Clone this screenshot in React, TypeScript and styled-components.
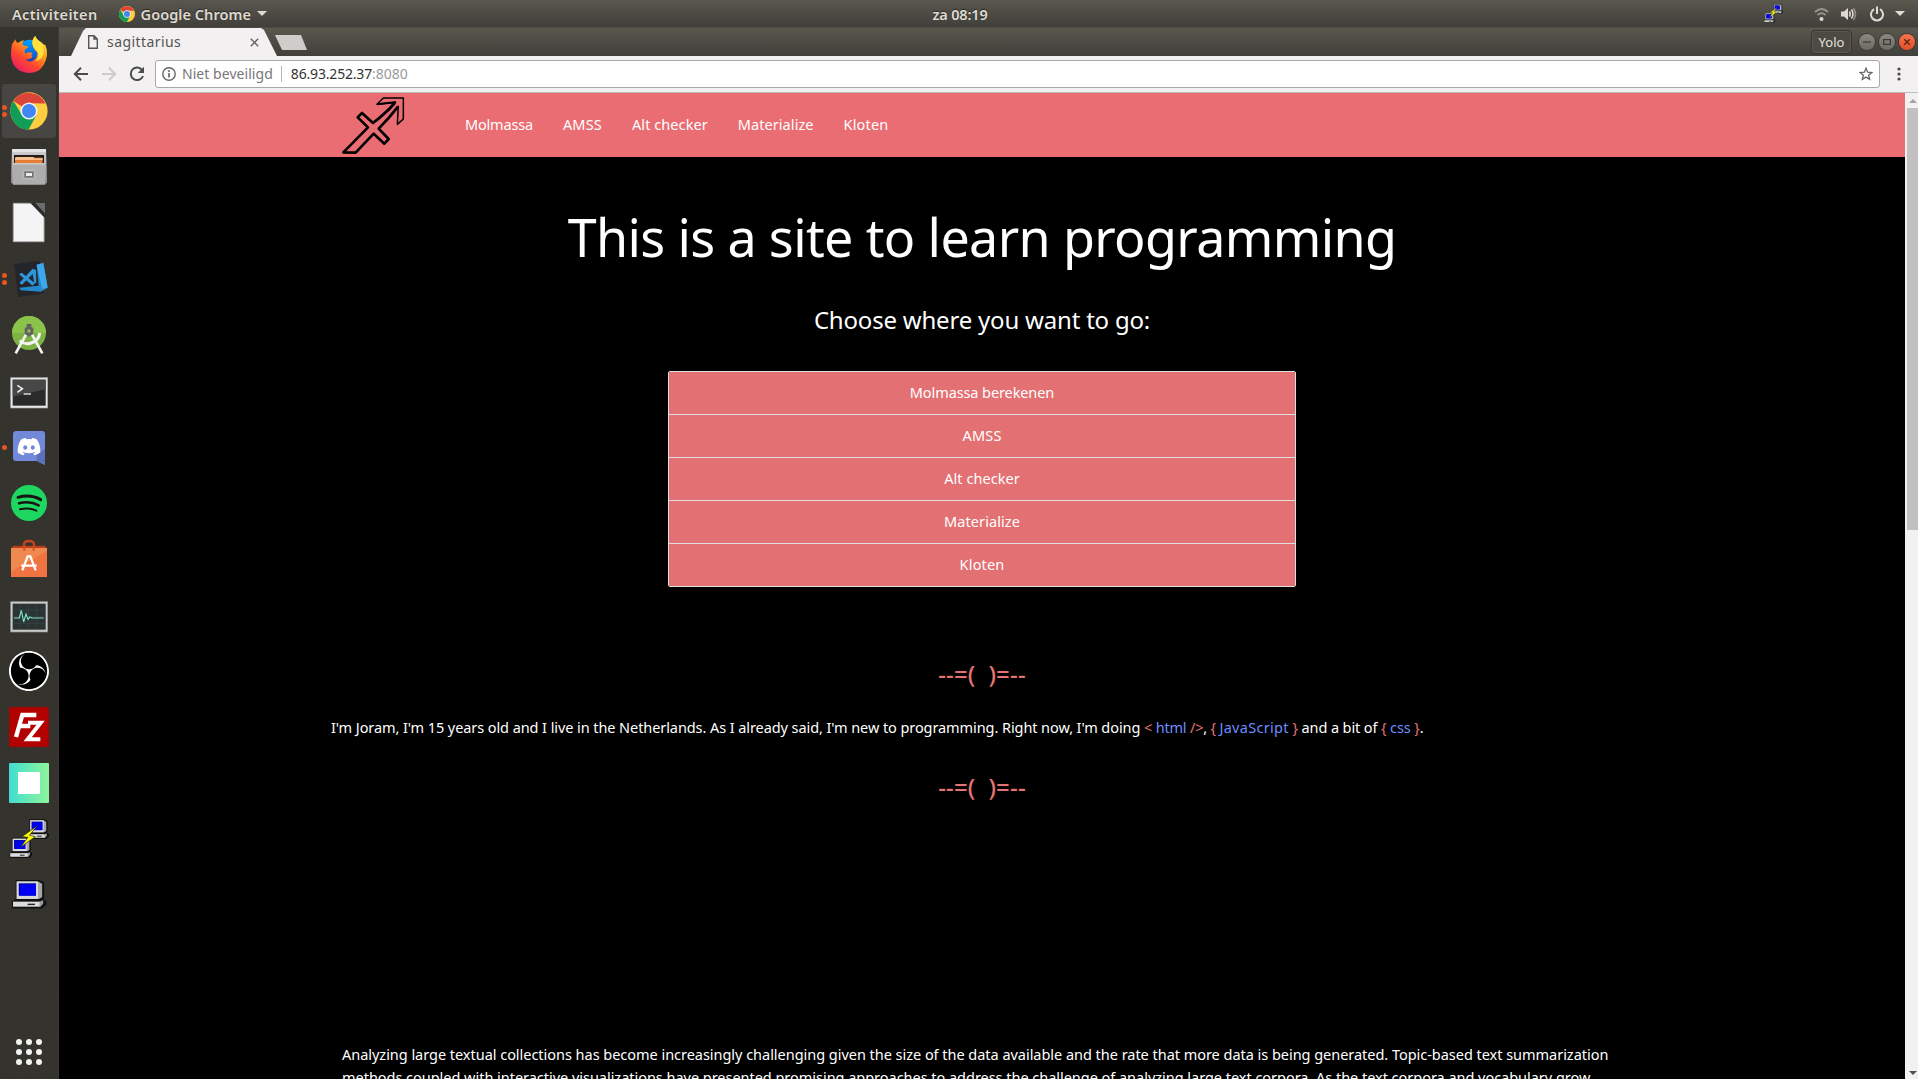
import React from 'react';
import styled, { createGlobalStyle, css } from 'styled-components';
import { FaDiscord } from 'react-icons/fa6';
import { SiObsstudio } from 'react-icons/si';

const Global = createGlobalStyle`
  *, *::before, *::after { box-sizing: border-box; }
  body { margin: 0; background: #000; overflow: hidden; font-family: "Noto Sans", "Open Sans", sans-serif; }
`;

const Desktop = styled.div`
  height: 100vh;
  display: grid;
  grid-template-rows: 27px minmax(0, 1fr);
  overflow: hidden;
`;

const T = styled.span<{ $track?: number }>`
  letter-spacing: ${p => p.$track ?? 0}px;
  white-space: pre;
`;

/* ---------- system bar ---------- */
const SystemBar = styled.header`
  display: grid;
  grid-template-columns: 1fr auto 1fr;
  align-items: center;
  padding: 0 10px 0 12px;
  background: linear-gradient(#5a574e, #403f3a);
  color: #dfdbd2;
  font-size: 14.5px;
  font-weight: 600;
  line-height: 26px;
  text-shadow: 0 -1px 1px rgba(0, 0, 0, 0.5);
`;
const BarGroup = styled.div<{ $end?: boolean }>`
  display: flex;
  align-items: center;
  justify-content: ${p => (p.$end ? 'flex-end' : 'flex-start')};
  height: 26px;
  svg { flex: none; display: block; }
`;
const Clock = styled.div`
  height: 26px;
`;
const ChromeSlot = styled.span`
  display: flex;
  margin: 0 6px 0 21px;
`;
const Caret = styled.span<{ $gap: number }>`
  margin-left: ${p => p.$gap}px;
  border: 5px solid transparent;
  border-top-color: #dfdbd2;
  border-bottom: 0;
`;
const TrayIcon = styled.span<{ $gap: number }>`
  display: flex;
  margin-left: ${p => p.$gap}px;
`;

const Workspace = styled.div`
  display: grid;
  grid-template-columns: 59px minmax(0, 1fr);
  min-height: 0;
`;

/* ---------- dock ---------- */
const DockBar = styled.nav`
  display: flex;
  flex-direction: column;
  min-height: 0;
  background:
    repeating-linear-gradient(60deg, rgba(255, 255, 255, 0.012) 0 2px, transparent 2px 5px),
    #34322d;
  border-right: 1px solid #3b3a35;
`;
const DockItem = styled.div<{ $active?: boolean }>`
  height: 54px;
  margin: 1px 2px;
  flex: none;
  display: grid;
  grid-template-columns: 5px 48px;
  align-items: center;
  border-radius: 3px;
  ${p => p.$active && css`background: #474642;`}
`;
const Pips = styled.div`
  display: grid;
  gap: 2px;
  i { width: 5px; height: 5px; border-radius: 50%; background: #e95420; }
`;
const AppGrid = styled.div`
  margin: auto 0 14px 16px;
  display: grid;
  grid-template-columns: repeat(3, 6px);
  gap: 4px;
  i { width: 6px; height: 6px; border-radius: 50%; background: #f2f2f0; }
`;

/* ---------- browser ---------- */
const Browser = styled.section`
  display: grid;
  grid-template-rows: 29px 37px minmax(0, 1fr);
  min-height: 0;
`;
const TabStrip = styled.div`
  display: flex;
  background: linear-gradient(#5a574e, #403f3a);
  border-top: 1px solid #4d4b43;
`;
const Tab = styled.div`
  width: 206px;
  height: 28px;
  margin-left: 12px;
  padding: 0 18px 0 17px;
  display: flex;
  align-items: center;
  background: #f2f0f1;
  clip-path: polygon(0 100%, 12px 3px, 15px 0, 190px 0, 193px 2px, 206px 100%);
  color: #555452;
  font-size: 14px;
  svg { flex: none; }
`;
const TabTitle = styled.span`
  flex: 1;
  margin-left: 9px;
  line-height: 28px;
`;
const NewTab = styled.div`
  width: 32px;
  height: 15px;
  margin: 7px 0 0 -2px;
  background: #cfcdca;
  clip-path: polygon(0 0, 26px 0, 32px 100%, 7px 100%);
`;
const WindowControls = styled.div`
  margin-left: auto;
  display: flex;
  align-items: center;
  gap: 4px;
  padding-right: 3px;
`;
const Profile = styled.div`
  width: 41px;
  height: 24px;
  margin-right: 3px;
  border: 1px solid #37362f;
  border-radius: 4px;
  box-shadow: inset 0 0 0 1px #5a5850;
  background: #4c4a43;
  color: #e4e2dc;
  font-size: 13px;
  line-height: 22px;
  text-align: center;
`;
const WinButton = styled.div<{ $close?: boolean }>`
  width: 16px;
  height: 16px;
  border-radius: 50%;
  display: grid;
  place-items: center;
  background: ${p => (p.$close ? 'linear-gradient(#f4734c, #e2502a)' : 'linear-gradient(#8a8880, #6c6b63)')};
  box-shadow: 0 0 0 1px #3a3932;
  svg { display: block; }
`;
const Toolbar = styled.div`
  display: flex;
  align-items: center;
  background: #f2f0f1;
  border-bottom: 1px solid #bdbbbc;
  padding: 0 17px 0 14px;
  svg { flex: none; display: block; }
`;
const NavIcons = styled.div`
  display: flex;
  gap: 12px;
  margin-right: 10px;
`;
const Omnibox = styled.div`
  flex: 1;
  height: 28px;
  display: flex;
  align-items: center;
  padding: 0 6px;
  border: 1px solid #a9a7a8;
  border-radius: 3px;
  background: #fff;
  font-size: 14px;
  line-height: 16px;
  color: #77777a;
`;
const Security = styled.span`
  margin: 0 9px 0 6px;
  padding-right: 8px;
  border-right: 1px solid #b5b5b5;
`;
const Raised = styled.span`
  padding-bottom: 1px;
`;
const Host = styled(Raised)`
  color: #333;
`;
const Port = styled(Raised)`
  flex: 1;
  color: #999;
`;
const MenuSlot = styled.span`
  display: flex;
  margin-left: 17px;
`;

const Viewport = styled.div`
  display: grid;
  grid-template-columns: minmax(0, 1fr) 13px;
  min-height: 0;
  overflow: hidden;
`;
const Scrollbar = styled.div`
  display: flex;
  flex-direction: column;
  align-items: center;
  background: #f1f1f1;
  padding: 6px 0 4px 2px;
`;
const ScrollArrow = styled.span<{ $down?: boolean }>`
  border: 4px solid transparent;
  ${p => (p.$down
    ? css`border-top-color: #505050; border-bottom: 0; margin-top: auto;`
    : css`border-bottom-color: #a3a3a3; border-top: 0;`)}
`;
const Thumb = styled.div`
  width: 11px;
  height: 422px;
  margin-top: 5px;
  background: #c1c1c1;
`;

/* ---------- site ---------- */
const Site = styled.div`
  background: #000;
  color: #fff;
  font-size: 14.5px;
  overflow: hidden;
`;
const SiteNav = styled.nav`
  height: 64px;
  background: #ea6d73;
  display: flex;
  align-items: center;
  padding-left: 282px;
  svg { margin-top: 2px; }
`;
const Links = styled.ul`
  list-style: none;
  margin: 0 0 0 60px;
  padding: 0;
  display: flex;
  gap: 30px;
  height: 64px;
  line-height: 62px;
`;
const Title = styled.h1`
  margin: 44px 0 0;
  font-size: 52px;
  font-weight: 400;
  line-height: 72px;
  text-align: center;
`;
const Subtitle = styled.h2`
  margin: 30px 0 0;
  font-size: 24px;
  font-weight: 400;
  line-height: 34px;
  text-align: center;
`;
const Menu = styled.ul`
  width: 628px;
  margin: 34px auto 0;
  padding: 0;
  list-style: none;
  border: 1px solid #e0e0e0;
  border-radius: 2px;
  overflow: hidden;
`;
const MenuItem = styled.li`
  height: 42px;
  line-height: 40px;
  text-align: center;
  background: #e37072;
  & + & { height: 43px; border-top: 1px solid #e0e0e0; }
`;
const Ornament = styled.div<{ $top: number }>`
  margin-top: ${p => p.$top}px;
  height: 34px;
  line-height: 34px;
  font-size: 24px;
  font-weight: 500;
  text-align: center;
  color: #e57373;
`;
const Bio = styled.p`
  margin: 25px 0 0 272px;
  line-height: 23px;
`;
const Mark = styled.span`
  color: #e57373;
`;
const Lang = styled.span`
  color: #6d8dff;
`;
const Article = styled.p`
  margin: 239px 0 0 283px;
  line-height: 22.5px;
`;
const Line = styled.span`
  display: block;
`;

/* ---------- drawings ---------- */
const ChromeLogo = () => (
  <>
    <circle cx="24" cy="24" r="24" fill="#ffcd40" />
    <path d="M24 24 4 11A24 24 0 0 1 45.500 14.500L24 14Z" fill="#db4437" />
    <path d="M4 11A24 24 0 0 0 23.500 48L33.500 29.500 14.800 29Z" fill="#0f9d58" />
    <circle cx="24" cy="24" r="11" fill="#f1f1f1" />
    <circle cx="24" cy="24" r="9" fill="#4285f4" />
  </>
);

const Pc = ({ x, y, s = 1, sy = s }: { x: number; y: number; s?: number; sy?: number }) => (
  <g transform={`translate(${x} ${y}) scale(${s} ${sy})`}>
    <path d="M7 0H52L62 5V38L54 44H7Z" fill="#111" />
    <path d="M9 3H50L58 8V36L50 41H9Z" fill="#a7a7a7" />
    <path d="M9 3H50V40H9Z" fill="#d9d9d9" />
    <path d="M13 7H46V33H13Z" fill="#00008a" />
    <path d="M15 9H46V33H15Z" fill="#0000f5" />
    <path d="M0 45 8 40H60L66 45V52L58 60H0Z" fill="#111" />
    <path d="M2 46H52L60 43V50L54 57H2Z" fill="#9c9c9c" />
    <path d="M2 46H53V55H2Z" fill="#dcdcdc" />
    <path d="M30 50H44V53H30Z" fill="#222" />
  </g>
);

const Putty = () => (
  <>
    <Pc x={82} y={718} s={0.98} />
    <Pc x={29} y={773} s={1.02} />
    <path d="M112 737 66 770 84 772 61 802 106 770 88 766Z" fill="#ff0" stroke="#222" strokeWidth="2" />
  </>
);

const Sagittarius = () => (
  <svg width="64" height="60" viewBox="1026 288 192 180" fill="none" stroke="#000" strokeLinejoin="round">
    <path d="M1187 309Q1160 340 1122 369L1089 339 1076 352 1107 382 1033 457 1070 458 1124 401 1156 431 1169 417 1139 386Q1170 355 1197 320" strokeWidth="8" />
    <path d="M1189 307 1134 313 1153 294H1213V357L1195 373 1198 317" strokeWidth="4.500" />
    <path d="M1134 313 1189 307 1166 333" strokeWidth="6" />
  </svg>
);

type App = { name: string; cy: number; pips?: number; active?: boolean; art: React.ReactNode };

const apps: App[] = [
  {
    name: 'firefox', cy: 105, art: (
      <>
        <defs>
          <linearGradient id="fx" x1="0.9" y1="0" x2="0.2" y2="1">
            <stop offset="0" stopColor="#fff44f" /><stop offset="0.35" stopColor="#ffa41c" />
            <stop offset="0.65" stopColor="#ff4a2d" /><stop offset="1" stopColor="#e8186c" />
          </linearGradient>
          <linearGradient id="fxb" x1="0" y1="0" x2="0" y2="1">
            <stop offset="0" stopColor="#00a2ff" /><stop offset="0.6" stopColor="#0a62dc" /><stop offset="1" stopColor="#321a80" />
          </linearGradient>
        </defs>
        <circle cx="90" cy="99" r="40" fill="url(#fxb)" />
        <path d="M36 73Q44 62 46 58 49 70 55 68 63 62 72 60 66 68 68 75L86 80 74 90 75 101Q90 93 98 101 90 108 98 108 90 122 76 116 86 130 101 121 113 112 112 98 98 84 97 68 98 54 106 48 109 58 124 67 134 78 136 74 142 88 141 106 136 138 115 152 84 166 57 151 33 135 33 103 33 86 36 73Z" fill="url(#fx)" />
        <path d="M106 48Q97 56 97 70 98 84 113 96 119 110 106 124 125 120 130 103 136 80 119 66 108 58 106 48Z" fill="#ffe13a" />
      </>
    ),
  },
  {
    name: 'chrome', cy: 273, pips: 2, active: true,
    art: <g transform="translate(31 217) scale(2.33)"><ChromeLogo /></g>,
  },
  {
    name: 'files', cy: 441, art: (
      <>
        <defs>
          <linearGradient id="cab" x1="0" y1="0" x2="0" y2="1"><stop offset="0" stopColor="#d2d2d2" /><stop offset="1" stopColor="#8d8d8d" /></linearGradient>
        </defs>
        <path d="M36 387H138L141 487 134 495H40L33 487Z" fill="url(#cab)" />
        <path d="M36 387H138V396H36Z" fill="#e4e4e4" />
        <rect x="42" y="405" width="90" height="30" fill="#241c17" />
        <path d="M45 413H128V432H45Z" fill="#e57b35" />
        <path d="M49 411H100L104 415H128V420H45V413Z" fill="#f7c08c" />
        <path d="M39 430H135V492H39Z" fill="#adadad" />
        <path d="M39 430H135V433H39Z" fill="#dedede" />
        <rect x="70" y="451" width="34" height="25" rx="4" fill="#8b8b8b" stroke="#d8d8d8" strokeWidth="2" />
        <rect x="77" y="458" width="20" height="11" fill="#eee" stroke="#555" strokeWidth="2" />
      </>
    ),
  },
  {
    name: 'libreoffice', cy: 609, art: (
      <>
        <path d="M40 550H95L132 590V665H40Z" fill="#f4f4f4" stroke="#b0b0b0" strokeWidth="3" />
        <path d="M105 549H135V581Z" fill="#6b6b6b" />
        <path d="M91 549H106L135 581V594Z" fill="#2b2b2b" />
      </>
    ),
  },
  {
    name: 'vscode', cy: 777, pips: 2, art: (
      <>
        <path d="M42 733 118 722 132 820 55 831Z" fill="#23252b" />
        <path d="M110 734 130 729 143 803 123 815 62 811 58 803 116 797Z" fill="#2489ca" />
        <path d="M110 734 130 729 143 803 126 806Z" fill="#3ea6ea" />
        <path d="M57 763 65 758 104 789 98 797Z M98 746 108 750 109 788 103 791 98 762 66 794 58 789Z" fill="#2f95d8" />
      </>
    ),
  },
  {
    name: 'android-studio', cy: 105, art: (
      <>
        <circle cx="87" cy="99" r="51" fill="#7cb342" />
        <path d="M36 99A51 51 0 0 1 138 99Z" fill="#8bc34a" />
        <path d="M78 104 47 160M96 104 127 160" stroke="#f3f3f3" strokeWidth="8" />
        <path d="M59 122Q75 136 93 129 117 122 119 99" fill="none" stroke="#f3f3f3" strokeWidth="9" />
        <path d="M80 72H94V80H80Z" fill="#5b5b5b" />
        <path d="M74 84 87 77 100 84V101L87 110 74 101Z" fill="#636363" />
        <circle cx="87" cy="93" r="5" fill="#8bc34a" />
      </>
    ),
  },
  {
    name: 'terminal', cy: 273, art: (
      <>
        <rect x="32" y="233" width="111" height="91" fill="#e6e6e4" stroke="#a5a5a3" strokeWidth="2" />
        <rect x="38" y="239" width="99" height="78" fill="#2a2a2a" />
        <path d="M38 239H137V268L38 290Z" fill="#474747" />
        <path d="M52 256 67 266 52 277" fill="none" stroke="#eee" strokeWidth="5" />
        <path d="M71 282H93" stroke="#eee" strokeWidth="4" />
      </>
    ),
  },
  {
    name: 'discord', cy: 441, pips: 1, art: (
      <>
        <path d="M48 393H126Q135 393 135 402V495L110 483H48Q39 483 39 474V402Q39 393 48 393Z" fill="#7289da" />
        <path d="M110 463 123 457 135 445V495L110 483Z" fill="#5a70bb" />
        <FaDiscord x={50} y={403} size={74} color="#fff" />
      </>
    ),
  },
  {
    name: 'spotify', cy: 609, art: (
      <>
        <circle cx="87" cy="609" r="54" fill="#1ed760" />
        <g fill="none" stroke="#191414" strokeLinecap="round">
          <path d="M54 592Q92 582 122 599" strokeWidth="9" />
          <path d="M57 610Q90 602 116 616" strokeWidth="7.500" />
          <path d="M60 628Q88 621 109 632" strokeWidth="6" />
        </g>
      </>
    ),
  },
  {
    name: 'software', cy: 777, art: (
      <>
        <path d="M72 755V732Q73 723 87 723T102 732V755" fill="none" stroke="#c8431b" strokeWidth="7" />
        <path d="M40 737H134L141 746H33Z" fill="#b93f18" />
        <path d="M33 744H141V831H33Z" fill="#f07341" />
        <path d="M33 744H141V752L33 815Z" fill="#f0894f" />
        <path d="M73 752V738M101 752V738" stroke="#d5501f" strokeWidth="6" />
        <path d="M67 811 83 769H91L107 811M64 797H110" fill="none" stroke="#fff" strokeWidth="7" />
      </>
    ),
  },
  {
    name: 'monitor', cy: 105, art: (
      <>
        <rect x="32" y="65" width="111" height="91" fill="#c9c9c7" stroke="#8f8f8d" strokeWidth="2" />
        <rect x="38" y="71" width="99" height="78" fill="#2b3333" />
        <path d="M38 90H137M38 110H137M38 130H137M60 71V149M85 71V149M110 71V149" stroke="#3b4747" strokeWidth="2" />
        <path d="M42 114H58L64 91 71 126 78 102 84 118 90 111 96 114H131" fill="none" stroke="#7fe0c8" strokeWidth="3.500" />
      </>
    ),
  },
  {
    name: 'obs', cy: 273, art: (
      <>
        <circle cx="87" cy="273" r="58" fill="#000" />
        <SiObsstudio x={27} y={213} size={120} color="#fff" />
      </>
    ),
  },
  {
    name: 'filezilla', cy: 441, art: (
      <>
        <rect x="29" y="383" width="116" height="116" fill="#b30000" />
        <rect x="29" y="383" width="116" height="116" fill="none" stroke="#b30000" strokeWidth="5" strokeDasharray="6 4" />
        <path d="M48 471 67 405H109M58 438H91" fill="none" stroke="#fff" strokeWidth="13" />
        <path d="M84 428H122L83 478H121" fill="none" stroke="#fff" strokeWidth="12" />
      </>
    ),
  },
  {
    name: 'stacer', cy: 609, art: (
      <>
        <defs><linearGradient id="st"><stop offset="0" stopColor="#41ddd2" /><stop offset="1" stopColor="#8ef59a" /></linearGradient></defs>
        <rect x="27" y="549" width="120" height="120" rx="3" fill="url(#st)" />
        <rect x="54" y="576" width="66" height="66" fill="#fff" />
      </>
    ),
  },
  { name: 'putty', cy: 777, art: <Putty /> },
  { name: 'putty-session', cy: 945, art: <Pc x={36} y={900} s={1.56} sy={1.42} /> },
];

const links = [
  { label: 'Molmassa', track: -0.19 },
  { label: 'AMSS', track: 0.2 },
  { label: 'Alt checker', track: 0.07 },
  { label: 'Materialize', track: 0.07 },
  { label: 'Kloten', track: 0.15 },
];
const menu = [{ label: 'Molmassa berekenen', track: -0.1 }, ...links.slice(1)];

export default function App() {
  return (
    <>
      <Global />
      <Desktop>
        <SystemBar>
          <BarGroup>
            <T $track={0.37}>Activiteiten</T>
            <ChromeSlot><svg width="16" height="16" viewBox="0 0 48 48"><ChromeLogo /></svg></ChromeSlot>
            <T $track={0.05}>Google Chrome</T>
            <Caret $gap={6} />
          </BarGroup>
          <Clock><T $track={-0.15}>za 08:19</T></Clock>
          <BarGroup $end>
            <svg width="19" height="21" viewBox="28 714 120 124"><Putty /></svg>
            <TrayIcon $gap={31}>
              <svg width="15" height="14" viewBox="0 0 15 14" fill="none" stroke="#dfdbd2" strokeWidth="2">
                <path d="M1 5Q7.500-1 14 5" opacity="0.5" /><path d="M3.500 8Q7.500 4.500 11.500 8" opacity="0.5" /><circle cx="7.500" cy="12" r="2" fill="#dfdbd2" stroke="none" />
              </svg>
            </TrayIcon>
            <TrayIcon $gap={12}>
              <svg width="16" height="14" viewBox="0 0 16 14" fill="none" stroke="#dfdbd2" strokeWidth="1.600">
                <path d="M0 4.500H3L7 1V13L3 9.500H0Z" fill="#dfdbd2" stroke="none" /><path d="M8.500 4.500Q10 7 8.500 9.500M10.500 2.500Q13.500 7 10.500 11.500" /><path d="M12.500 1Q16.500 7 12.500 13" opacity="0.45" />
              </svg>
            </TrayIcon>
            <TrayIcon $gap={13}>
              <svg width="14" height="16" viewBox="0 0 14 16" fill="none" stroke="#dfdbd2" strokeWidth="2">
                <path d="M4 3.200A6 6 0 1 0 10 3.200M7 0.500V8" />
              </svg>
            </TrayIcon>
            <Caret $gap={11} />
            <TrayIcon $gap={3} />
          </BarGroup>
        </SystemBar>
        <Workspace>
          <DockBar>
            {apps.map(app => (
              <DockItem key={app.name} $active={app.active}>
                <Pips>{Array.from({ length: app.pips ?? 0 }, (_, i) => <i key={i} />)}</Pips>
                <svg width="48" height="48" viewBox={`21 ${app.cy - 72} 144 144`}>{app.art}</svg>
              </DockItem>
            ))}
            <AppGrid>{Array.from({ length: 9 }, (_, i) => <i key={i} />)}</AppGrid>
          </DockBar>
          <Browser>
            <TabStrip>
              <Tab>
                <svg width="10" height="14" viewBox="0 0 10 14" fill="none" stroke="#555" strokeWidth="1.400"><path d="M0.700 0.700H6L9.300 4V13.300H0.700ZM6 0.700V4H9.300" /></svg>
                <TabTitle><T $track={0.42}>sagittarius</T></TabTitle>
                <svg width="9" height="9" viewBox="0 0 9 9" stroke="#666" strokeWidth="1.500"><path d="M0.800 0.800 8.200 8.200M8.200 0.800 0.800 8.200" /></svg>
              </Tab>
              <NewTab />
              <WindowControls>
                <Profile><T>Yolo</T></Profile>
                <WinButton><svg width="8" height="8" stroke="#3a3932" strokeWidth="1.200"><path d="M0 4H8" /></svg></WinButton>
                <WinButton><svg width="8" height="8" fill="none" stroke="#3a3932" strokeWidth="1.200"><path d="M0.600 1.600H7.400V6.400H0.600Z" /></svg></WinButton>
                <WinButton $close><svg width="8" height="8" stroke="#5a2412" strokeWidth="1.300"><path d="M1.200 1.200 6.800 6.800M6.800 1.200 1.200 6.800" /></svg></WinButton>
              </WindowControls>
            </TabStrip>
            <Toolbar>
              <NavIcons>
                <svg width="16" height="16" viewBox="0 0 16 16" fill="none" stroke="#4a4a4a" strokeWidth="2"><path d="M15 8H2.500M8 1.800 1.800 8 8 14.200" /></svg>
                <svg width="16" height="16" viewBox="0 0 16 16" fill="none" stroke="#cccacb" strokeWidth="2"><path d="M1 8H13.500M8 1.800 14.200 8 8 14.200" /></svg>
                <svg width="16" height="16" viewBox="0 0 16 16" fill="none" stroke="#4a4a4a" strokeWidth="2"><path d="M13.300 4.200A6.300 6.300 0 1 0 14 10" /><path d="M15 0.800V7H8.800Z" fill="#4a4a4a" stroke="none" /></svg>
              </NavIcons>
              <Omnibox>
                <svg width="14" height="14" viewBox="0 0 14 14" fill="none" stroke="#666" strokeWidth="1.400"><circle cx="7" cy="7" r="6.200" /><path d="M7 6V10.500M7 3.300V4.900" strokeWidth="1.700" /></svg>
                <Security><T $track={0.05}>Niet beveiligd</T></Security>
                <Host><T $track={-0.18}>86.93.252.37</T></Host>
                <Port><T>:8080</T></Port>
                <svg width="14" height="14" viewBox="0 0 14 14" fill="none" stroke="#666" strokeWidth="1.300"><path d="M7 1.300 8.600 5.200 12.900 5.500 9.600 8.200 10.700 12.400 7 10.100 3.300 12.400 4.400 8.200 1.100 5.500 5.400 5.200Z" /></svg>
              </Omnibox>
              <MenuSlot><svg width="4" height="14" viewBox="0 0 4 14" fill="#4a4a4a"><circle cx="2" cy="2" r="1.600" /><circle cx="2" cy="7" r="1.600" /><circle cx="2" cy="12" r="1.600" /></svg></MenuSlot>
            </Toolbar>
            <Viewport>
              <Site>
                <SiteNav>
                  <Sagittarius />
                  <Links>{links.map(l => <li key={l.label}><T $track={l.track}>{l.label}</T></li>)}</Links>
                </SiteNav>
                <Title><T $track={-0.62}>This is a site to learn programming</T></Title>
                <Subtitle><T $track={-0.2}>Choose where you want to go:</T></Subtitle>
                <Menu>{menu.map(l => <MenuItem key={l.label}><T $track={l.track}>{l.label}</T></MenuItem>)}</Menu>
                <Ornament $top={70}><T $track={0.2}>{'--=(  )=--'}</T></Ornament>
                <Bio>
                  <T $track={-0.08}>{"I'm Joram, I'm 15 years old and I live in the Netherlands. As I already said, I'm new to programming. Right now, I'm doing "}</T>
                  <T $track={-0.2}><Mark>&lt;</Mark> <Lang>html</Lang> <Mark>/&gt;</Mark>, <Mark>{'{'}</Mark> </T>
                  <T $track={0.3}><Lang>JavaScript</Lang></T>
                  <T $track={-0.11}> <Mark>{'}'}</Mark> and a bit of <Mark>{'{'}</Mark> <Lang>css</Lang> <Mark>{'}'}</Mark>.</T>
                </Bio>
                <Ornament $top={31}><T $track={0.2}>{'--=(  )=--'}</T></Ornament>
                <Article>
                  <Line><T $track={-0.03}>Analyzing large textual collections has become increasingly challenging given the size of the data available and the rate that more data is being generated. Topic-based text summarization</T></Line>
                  <Line><T $track={-0.028}>methods coupled with interactive visualizations have presented promising approaches to address the challenge of analyzing large text corpora. As the text corpora and vocabulary grow</T></Line>
                </Article>
              </Site>
              <Scrollbar><ScrollArrow /><Thumb /><ScrollArrow $down /></Scrollbar>
            </Viewport>
          </Browser>
        </Workspace>
      </Desktop>
    </>
  );
}
